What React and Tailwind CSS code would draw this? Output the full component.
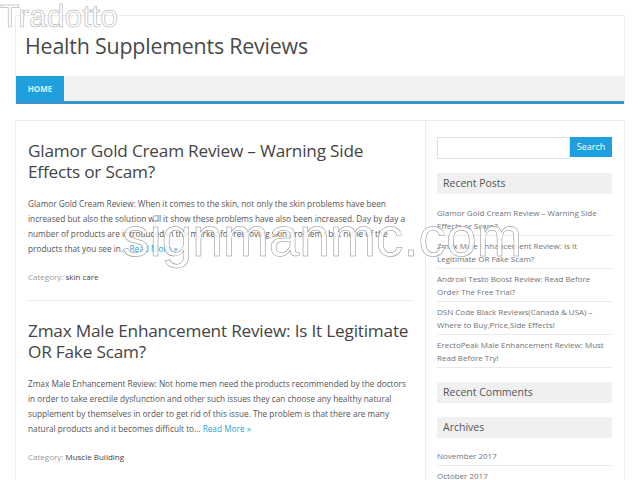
import React from 'react';

const posts = [
  'Glamor Gold Cream Review – Warning Side Effects or Scam?',
  'Zmax Male Enhancement Review: Is It Legitimate OR Fake Scam?',
  'Androxl Testo Boost Review: Read Before Order The Free Trial?',
  'DSN Code Black Reviews(Canada & USA) – Where to Buy,Price,Side Effects!',
  'ErectoPeak Male Enhancement Review: Must Read Before Try!',
];

const articles = [
  {
    title: 'Glamor Gold Cream Review – Warning Side Effects or Scam?',
    body: 'Glamor Gold Cream Review: When it comes to the skin, not only the skin problems have been increased but also the solution will it show these problems have also been increased. Day by day a number of products are introduced in the market for removing skin problems but none of the products that you see in…',
    category: 'skin care',
  },
  {
    title: 'Zmax Male Enhancement Review: Is It Legitimate OR Fake Scam?',
    body: 'Zmax Male Enhancement Review: Not home men need the products recommended by the doctors in order to take erectile dysfunction and other such issues they can choose any healthy natural supplement by themselves in order to get rid of this issue. The problem is that there are many natural products and it becomes difficult to…',
    category: 'Muscle Building',
  },
];

const SideHeading = ({ children }) => (
  <div className="bg-[#f0f0f0] h-[21px] px-[6px] flex items-center text-[10.5px] text-[#555]">{children}</div>
);

export default function App() {
  return (
    <div className="relative w-[640px] h-[480px] overflow-hidden bg-white font-['Open_Sans',sans-serif]">
      <div className="px-[15px] pt-[15px]">
        {/* header */}
        <div className="border border-[#ececec] border-b-0">
          <div className="h-[60px] pl-[9px] pt-[16px] text-[21.4px] leading-[28px] text-[#4a4a4a] tracking-[-0.2px]">
            Health Supplements Reviews
          </div>
          <div className="flex h-[28px] bg-[#f2f2f2] border-b-[3px] border-[#3a93c9]">
            <div className="w-[48px] bg-[#1f9fdc] flex items-center justify-center text-[8px] font-bold text-[#d8f2ff]">HOME</div>
          </div>
        </div>

        {/* main */}
        <div className="mt-[16px] border border-[#ececec] flex">
          <div className="w-[410px] border-r border-[#ececec] pl-[12px] pr-[13px]">
            {articles.map((a, i) => (
              <div key={i} className="pt-[19px] pb-[17px] border-b border-[#eaeaea]">
                <h2 className="text-[17.2px] leading-[21px] text-[#444] tracking-[-0.2px]">{a.title}</h2>
                <p className="mt-[14px] text-[8.25px] leading-[15px] text-[#555]">
                  {a.body} <span className="text-[#2b9fd8]">Read More »</span>
                </p>
                <div className="mt-[15px] text-[8px] text-[#999]">
                  Category: <span className="text-[#444]">{a.category}</span>
                </div>
              </div>
            ))}
          </div>

          <div className="flex-1 pl-[11px] pr-[12px] pt-[16px]">
            <div className="flex h-[22px]">
              <div className="flex-1 border border-[#e2e2e2]"></div>
              <div className="w-[42px] h-[20px] bg-[#1fa0de] text-white text-[9px] flex items-center justify-center">Search</div>
            </div>
            <div className="mt-[14px]">
              <SideHeading>Recent Posts</SideHeading>
              <ul className="mt-[9px]">
                {posts.map((p, i) => (
                  <li key={i} className="text-[8px] leading-[13px] text-[#737373] pt-[3px] pb-[3px] border-b border-[#eaeaea]">
                    {p}
                  </li>
                ))}
              </ul>
            </div>
            <div className="mt-[14px]">
              <SideHeading>Recent Comments</SideHeading>
            </div>
            <div className="mt-[14px]">
              <SideHeading>Archives</SideHeading>
              <ul className="mt-[8px]">
                <li className="text-[8px] leading-[13px] text-[#737373] pt-[3px] pb-[3px] border-b border-[#eaeaea]">November 2017</li>
                <li className="text-[8px] leading-[13px] text-[#737373] pt-[3px] pb-[3px]">October 2017</li>
              </ul>
            </div>
          </div>
        </div>
      </div>

      {/* watermarks */}
      <div className="absolute left-0 top-[1px] text-[32px] leading-[30px] text-white font-['Liberation_Sans',sans-serif] [-webkit-text-stroke:0.5px_#a0a0a0]">
        Tradotto
      </div>
      <div className="absolute left-[122px] top-[207px] text-[55px] leading-[60px] text-white/85 font-['Liberation_Sans',sans-serif] [-webkit-text-stroke:0.5px_#8a8a8a]">
        signmanmc.com
      </div>
    </div>
  );
}
